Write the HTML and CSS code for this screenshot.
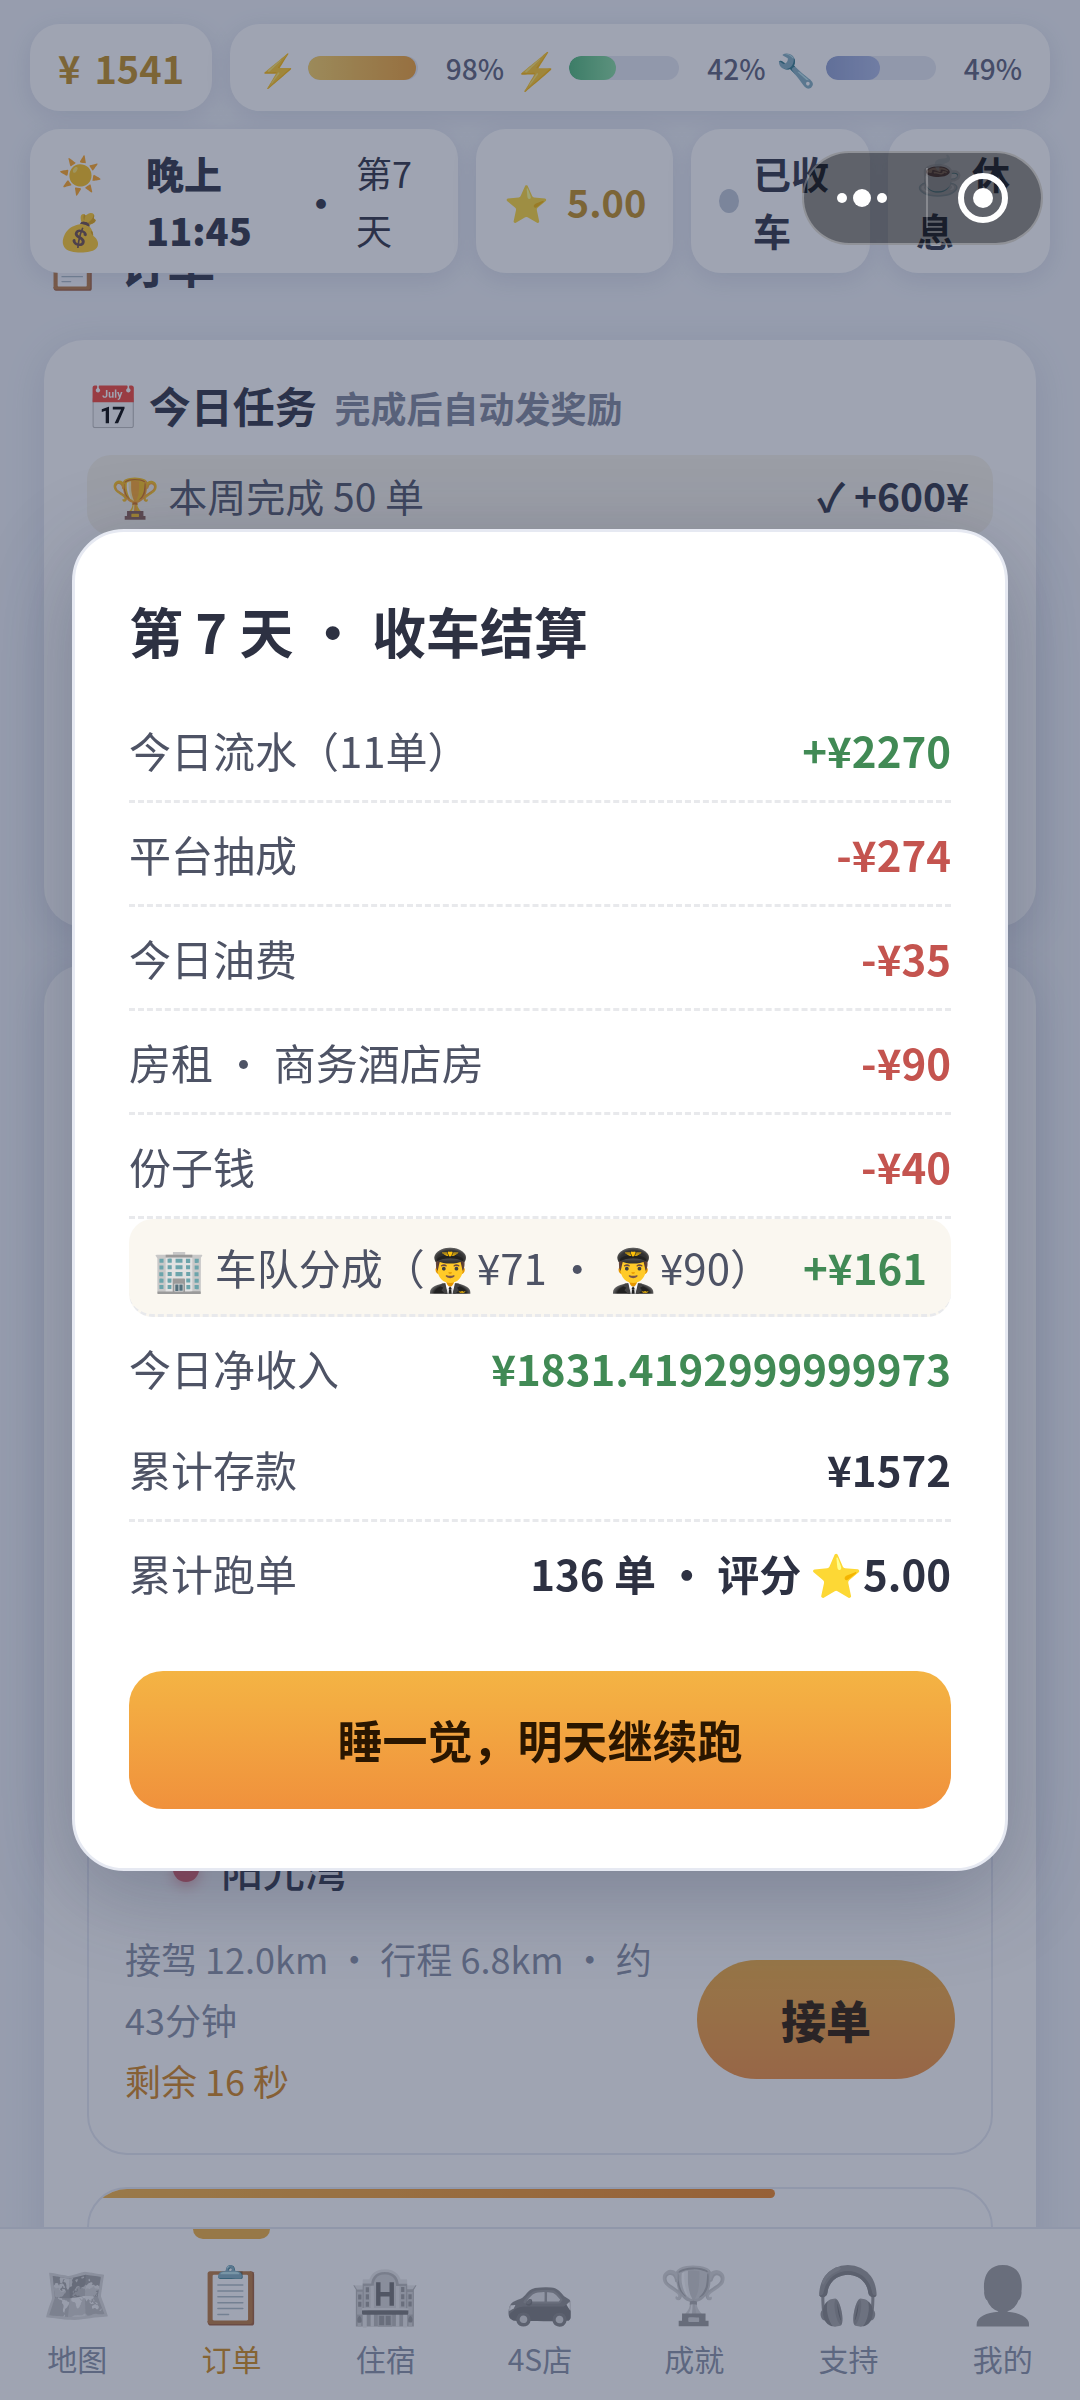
FILE: index.html
```
<!DOCTYPE html>
<html lang="zh-CN">
  <head>
    <meta charset="UTF-8" />
    <meta name="viewport" content="width=device-width, initial-scale=1" />
    <title>订单</title>
    <link rel="stylesheet" href="styles.css" />
  </head>
  <body>
    <div class="app">
      <header class="topbar">
        <div class="topbar-row">
          <div class="chip money"><span>¥</span><span>1541</span></div>
          <div class="chip meters">
            <div class="meter">
              <span class="meter-icon">⚡</span>
              <span class="track"><span class="fill energy" style="width: 98%"></span></span>
              <span class="meter-value">98%</span>
            </div>
            <div class="meter">
              <span class="meter-icon large">⚡</span>
              <span class="track"><span class="fill fuel" style="width: 42%"></span></span>
              <span class="meter-value">42%</span>
            </div>
            <div class="meter">
              <span class="meter-icon">🔧</span>
              <span class="track"><span class="fill repair" style="width: 49%"></span></span>
              <span class="meter-value">49%</span>
            </div>
          </div>
        </div>
        <div class="topbar-grid">
          <div class="chip clock">
            <span class="weather">☀️💰</span>
            <strong class="time">晚上 11:45</strong>
            <span class="dot">·</span>
            <span class="day">第7天</span>
          </div>
          <div class="chip rating"><span class="star">⭐</span><span>5.00</span></div>
          <button class="chip status" type="button">
            <span class="status-dot"></span><span class="status-text">已收车</span>
          </button>
          <button class="chip rest" type="button">☕ 休息</button>
        </div>
      </header>

      <main class="page">
        <h1 class="page-title"><span class="title-icon">📋</span><span>订单</span></h1>

        <section class="card tasks">
          <h2 class="card-title">📅 今日任务 <small>完成后自动发奖励</small></h2>
          <div class="task">
            <span>🏆 本周完成 50 单</span>
            <strong>✓ +600¥</strong>
          </div>
        </section>

        <section class="card orders">
          <article class="order first">
            <div class="stop"><i class="pin"></i>阳光湾</div>
            <div class="order-foot">
              <div class="order-meta">
                <p>接驾 12.0km · 行程 6.8km · 约43分钟</p>
                <p class="left-time">剩余 16 秒</p>
              </div>
              <button class="accept" type="button">接单</button>
            </div>
          </article>
          <article class="order next">
            <div class="countdown" style="width: 76%"></div>
          </article>
        </section>
      </main>

      <nav class="tabbar">
        <a class="tab" href="#map"><span class="tab-icon">🗺️</span>地图</a>
        <a class="tab active" href="#orders"><span class="tab-icon">📋</span>订单</a>
        <a class="tab" href="#hotel"><span class="tab-icon">🏨</span>住宿</a>
        <a class="tab" href="#shop"><span class="tab-icon">🚗</span>4S店</a>
        <a class="tab" href="#awards"><span class="tab-icon">🏆</span>成就</a>
        <a class="tab" href="#support"><span class="tab-icon">🎧</span>支持</a>
        <a class="tab" href="#me"><span class="tab-icon">👤</span>我的</a>
      </nav>
    </div>

    <!-- End of day settlement -->
    <div class="mask">
      <div class="modal" role="dialog" aria-labelledby="modalTitle">
        <h2 class="modal-title" id="modalTitle">第 7 天 · 收车结算</h2>
        <dl class="bill">
          <div class="bill-row"><dt>今日流水（11单）</dt><dd class="plus">+¥2270</dd></div>
          <div class="bill-row"><dt>平台抽成</dt><dd class="minus">-¥274</dd></div>
          <div class="bill-row"><dt>今日油费</dt><dd class="minus">-¥35</dd></div>
          <div class="bill-row"><dt>房租 · 商务酒店房</dt><dd class="minus">-¥90</dd></div>
          <div class="bill-row"><dt>份子钱</dt><dd class="minus">-¥40</dd></div>
          <div class="bill-row fleet"><dt>🏢 车队分成（👨‍✈️¥71 · 👨‍✈️¥90）</dt><dd class="plus">+¥161</dd></div>
          <div class="bill-row plain"><dt>今日净收入</dt><dd class="plus">¥1831.4192999999973</dd></div>
          <div class="bill-row"><dt>累计存款</dt><dd>¥1572</dd></div>
          <div class="bill-row plain"><dt>累计跑单</dt><dd>136 单 · 评分 ⭐5.00</dd></div>
        </dl>
        <button class="sleep" type="button">睡一觉，明天继续跑</button>
      </div>
    </div>

    <!-- Mini program capsule -->
    <div class="capsule">
      <button type="button" aria-label="更多">
        <svg width="52" height="20" viewBox="0 0 52 20" fill="#fff">
          <circle cx="6" cy="10" r="5" />
          <circle cx="26" cy="10" r="9" />
          <circle cx="46" cy="10" r="5" />
        </svg>
      </button>
      <button type="button" aria-label="关闭">
        <svg width="52" height="52" viewBox="0 0 52 52">
          <circle cx="26" cy="26" r="22" fill="none" stroke="#fff" stroke-width="6" />
          <circle cx="26" cy="26" r="10" fill="#fff" />
        </svg>
      </button>
    </div>
  </body>
</html>
```
FILE: styles.css
```
* {
  box-sizing: border-box;
}
body {
  margin: 0;
  font-family: "Noto Sans CJK SC", "Noto Color Emoji", sans-serif;
  font-size: 38px;
  line-height: 1.5;
  color: #2d3142;
  background: #f0f3f8;
}
h1,
h2,
p,
dl,
dd {
  margin: 0;
}
button {
  font: inherit;
  color: inherit;
  border: 0;
  cursor: pointer;
}
.app {
  display: flex;
  flex-direction: column;
  height: 100vh;
  overflow: hidden;
}

/* top chips */
.topbar {
  position: absolute;
  top: 0;
  left: 0;
  right: 0;
  z-index: 2;
  display: flex;
  flex-direction: column;
  gap: 18px;
  padding: 24px 30px 0;
}
.topbar-row {
  display: flex;
  gap: 18px;
}
.topbar-grid {
  display: grid;
  grid-template-columns: 428fr 197fr 179fr 162fr;
  gap: 18px;
}
.chip {
  display: flex;
  align-items: center;
  min-width: 0;
  padding: 15px 28px;
  border-radius: 30px;
  background: #fff;
  box-shadow: 0 6px 24px rgba(75, 88, 140, 0.15);
  font-weight: 700;
}
.money {
  gap: 14px;
  color: #c08c1e;
}
.meters {
  flex: 1;
  justify-content: space-between;
}
.meter {
  display: flex;
  align-items: center;
  gap: 10px;
}
.meter-icon {
  font-size: 32px;
}
.meter-icon.large {
  font-size: 36px;
}
.track {
  width: 110px;
  height: 24px;
  border-radius: 12px;
  background: #e6e9f3;
  overflow: hidden;
}
.fill {
  display: block;
  height: 100%;
  border-radius: 12px;
}
.energy {
  background: linear-gradient(90deg, #f8d060, #f0a030);
}
.fuel {
  background: linear-gradient(90deg, #4cb877, #86dd9f);
}
.repair {
  background: linear-gradient(90deg, #8fa0d2, #aab8e4);
}
.meter-value {
  width: 76px;
  font-size: 28px;
  font-weight: 500;
  text-align: right;
  color: #5b6078;
}
.clock {
  justify-content: space-between;
}
.weather {
  width: 72px;
  font-size: 36px;
  line-height: 57px;
  word-break: break-all;
}
.time {
  width: 140px;
}
.day {
  width: 74px;
  font-size: 36px;
  line-height: 57px;
  font-weight: 400;
}
.rating {
  gap: 18px;
  color: #c08c1e;
}
.star {
  font-size: 36px;
}
.status {
  gap: 14px;
  text-align: left;
}
.status-dot {
  flex: none;
  width: 20px;
  height: 24px;
  border-radius: 50%;
  background: #bdc6d6;
}
.rest {
  display: block;
  text-align: left;
}

/* page */
.page {
  flex: 1;
  min-height: 0;
  padding: 228px 44px 0;
  overflow: hidden;
}
.page-title {
  display: flex;
  gap: 18px;
  margin-bottom: 43px;
  font-size: 48px;
  line-height: 69px;
}
.title-icon {
  font-size: 46px;
}
.card {
  margin-bottom: 38px;
  padding: 33px 43px 0;
  border-radius: 40px;
  background: #fff;
  box-shadow: 0 8px 40px rgba(75, 88, 140, 0.15);
}
.tasks {
  min-height: 587px;
}
.card-title {
  margin-bottom: 16px;
  font-size: 42px;
  line-height: 64px;
}
.card-title small {
  margin-left: 8px;
  font-size: 36px;
  color: #7f869a;
}
.task {
  display: flex;
  justify-content: space-between;
  padding: 11px 24px;
  border-radius: 24px;
  background: #f7f4ea;
  font-size: 39px;
  line-height: 58px;
  color: #4e5365;
}
.task strong {
  color: #2d3142;
}
.orders {
  min-height: 1400px;
}
.order {
  border: 2px solid #e6e9f2;
  border-radius: 40px;
  overflow: hidden;
}
.order.first {
  display: flex;
  flex-direction: column;
  justify-content: flex-end;
  min-height: 1157px;
  margin-bottom: 32px;
  padding: 0 36px 42px;
}
.stop {
  display: flex;
  align-items: center;
  gap: 22px;
  padding-left: 48px;
  margin-bottom: 28px;
  font-size: 42px;
  line-height: 62px;
  font-weight: 500;
}
.pin {
  width: 26px;
  height: 26px;
  border-radius: 50%;
  background: #e05a64;
  box-shadow: 0 4px 14px rgba(224, 90, 100, 0.5);
}
.order-foot {
  display: flex;
  align-items: center;
  gap: 32px;
}
.order-meta {
  flex: 1;
  font-size: 36px;
  line-height: 61px;
  color: #868da1;
}
.left-time {
  color: #d2841a;
}
.accept {
  width: 258px;
  height: 119px;
  border-radius: 60px;
  background: linear-gradient(#f0ad3e, #f08f3c);
  font-size: 45px;
  font-weight: 900;
  color: #2a1600;
}
.order.next {
  min-height: 300px;
}
.countdown {
  height: 9px;
  border-radius: 0 5px 5px 0;
  background: linear-gradient(90deg, #f5b342, #ee8420);
}

/* bottom tabs */
.tabbar {
  position: relative;
  z-index: 1;
  display: flex;
  border-top: 2px solid #e4e7f0;
  background: #fff;
}
.tab {
  flex: 1;
  position: relative;
  display: flex;
  flex-direction: column;
  align-items: center;
  height: 171px;
  padding-top: 18px;
  font-size: 30px;
  line-height: 46px;
  color: #8890a5;
  text-decoration: none;
}
.tab-icon {
  font-size: 56px;
  line-height: 88px;
  filter: grayscale(1);
  opacity: 0.65;
}
.tab.active {
  color: #d08a18;
}
.tab.active::before {
  content: "";
  position: absolute;
  top: 0;
  width: 77px;
  height: 10px;
  border-radius: 0 0 10px 10px;
  background: #f0b03c;
}
.tab.active .tab-icon {
  filter: none;
  opacity: 1;
}

/* settlement modal */
.mask {
  position: fixed;
  inset: 0;
  z-index: 10;
  display: flex;
  align-items: center;
  justify-content: center;
  padding: 0 72px;
  background: rgba(42, 54, 84, 0.45);
}
.modal {
  width: 100%;
  padding: 60px 54px 59px;
  border: 3px solid #e6e9f2;
  border-radius: 52px;
  background: #fff;
  box-shadow: 0 24px 90px rgba(40, 50, 80, 0.3);
}
.modal-title {
  margin-bottom: 29px;
  font-size: 54px;
  line-height: 78px;
}
.bill-row {
  display: flex;
  justify-content: space-between;
  padding: 20px 0;
  border-bottom: 3px dashed #e8e9ec;
  font-size: 42px;
  line-height: 61px;
}
.bill-row dt {
  color: #4e5365;
}
.bill-row dd {
  font-weight: 700;
}
.bill-row.plain {
  border-bottom: 0;
}
.bill-row.fleet {
  padding: 17px 24px;
  border-radius: 24px;
  background: #faf7f0;
}
.bill-row .plus {
  color: #418a55;
}
.bill-row .minus {
  color: #c4544f;
}
.sleep {
  display: block;
  width: 100%;
  height: 138px;
  margin-top: 48px;
  border-radius: 34px;
  background: linear-gradient(#f4b444, #f0913c);
  font-size: 45px;
  font-weight: 700;
  color: #2a1600;
}

/* capsule buttons */
.capsule {
  position: fixed;
  top: 151px;
  right: 37px;
  z-index: 20;
  display: grid;
  grid-template-columns: 1fr 1fr;
  gap: 6px;
  width: 241px;
  height: 94px;
  border: 2px solid rgba(255, 255, 255, 0.3);
  border-radius: 47px;
  background: rgba(0, 0, 0, 0.4);
}
.capsule button {
  display: flex;
  align-items: center;
  justify-content: center;
  padding: 0;
  background: none;
}
.capsule button + button {
  background: linear-gradient(rgba(255, 255, 255, 0.25), rgba(255, 255, 255, 0.25)) left center / 2px 60px no-repeat;
}
```
